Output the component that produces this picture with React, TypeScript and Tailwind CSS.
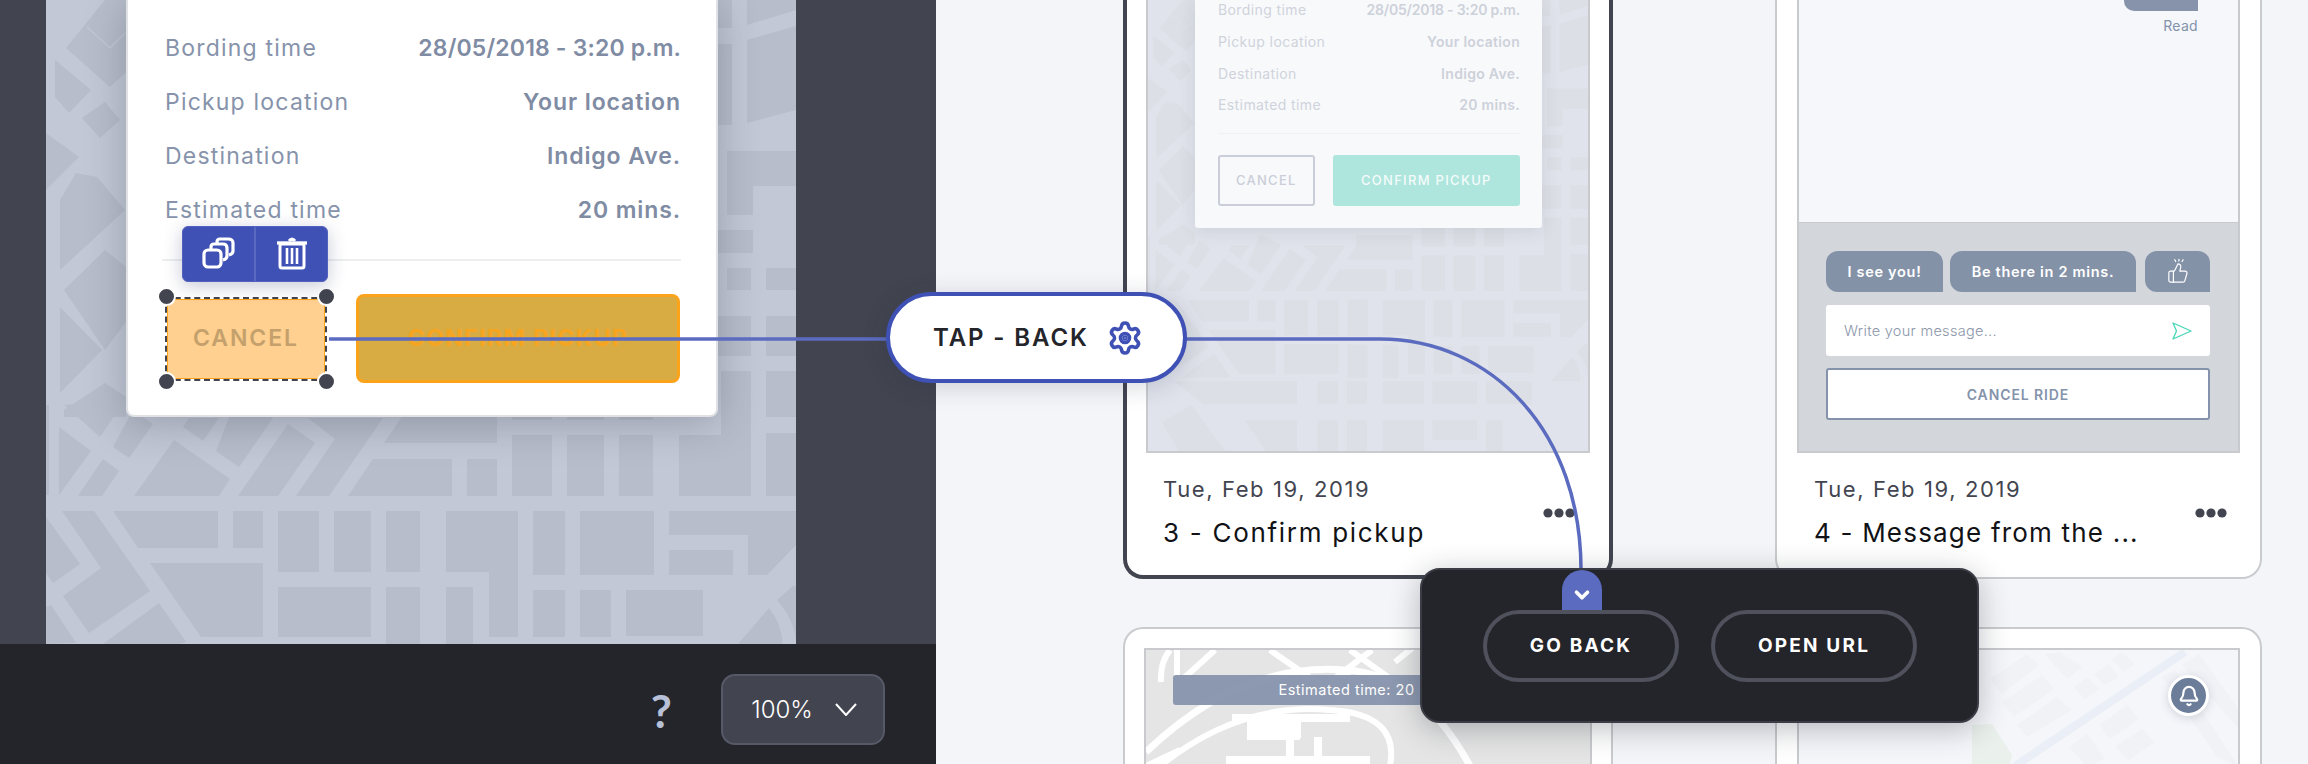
import { Bell, ChevronDown, Settings, ThumbsUp } from "lucide-react";

// map blocks, in the coordinates of the big canvas phone (46..796 wide)
const blocks = [
  "113,511 218,511 218,548 138,548",
  "233,511 263,511 263,548 233,548",
  "278,511 319,511 319,572 278,572",
  "334,511 371,511 371,572 334,572",
  "386,511 420,511 420,572 386,572",
  "150,563 263,563 263,637 201,637",
  "278,587 371,587 371,637 278,637",
  "386,587 420,587 420,644 386,644",
  "62,511 94,511 150,591 89,633 63,596 101,568",
  "46,517 80,564 53,583 46,573",
  "159,603 186,642 179,644 103,644",
  "46,607 51,605 76,643 46,644",
  "59,427 91,451 59,495",
  "103,459 119,471 102,496 78,496",
  "174,440 230,479 219,496 134,496",
  "288,424 315,443 278,496 238,496",
  "216,451 239,467 273,418 238,400 228,420",
  "183,427 203,441 219,418 189,418",
  "113,447 129,458 153,424 133,410",
  "64,405 100,437 125,400",
  "46,405 49,405 49,495 46,495",
  "308,418 335,439 296,496 329,496 383,418",
  "348,496 373,459 452,459 452,496",
  "384,443 401,418 401,400 497,400 497,443",
  "467,459 497,459 497,496 467,496",
  "512,435 552,435 552,496 512,496",
  "567,435 604,435 604,496 567,496",
  "619,435 653,435 653,496 619,496",
  "512,380 552,380 552,420 512,420",
  "567,380 604,380 604,420 567,420",
  "619,380 653,380 653,420 619,420",
  "679,435 721,435 721,371 751,371 751,496 679,496",
  "766,433 796,433 796,496 766,496",
  "766,371 796,371 796,417 766,417",
  "400,511 420,511 420,572 400,572",
  "446,511 518,511 518,637 489,637 489,572 446,572",
  "533,511 565,511 565,575 533,575",
  "580,511 654,511 654,575 580,575",
  "669,511 796,511 796,545 767,575 748,575 748,535 669,535",
  "669,550 733,550 733,575 669,575",
  "533,590 565,590 565,637 533,637",
  "580,590 611,590 611,637 580,637",
  "626,590 703,590 703,636 626,636",
  "446,587 473,587 473,644 446,644",
  "718,0 732,0 732,28 718,28",
  "718,44 732,44 732,125 718,125",
  "747,0 796,0 796,10 747,25",
  "747,40 796,26 796,110 747,123",
  "727,151 796,151 796,186 753,186 753,215 727,215",
  "718,230 753,230 753,253 718,253",
  "727,268 751,268 751,290 727,290",
  "766,268 796,268 796,290 766,290",
  "718,316 751,316 751,356 718,356",
  "766,316 796,316 796,356 766,356",
  "66,48 105,0 126,0 126,72 110,87",
  "55,60 91,90 69,113 55,97",
  "82,118 105,102 120,120 100,138",
  "46,133 79,157 46,190",
  "76,173 60,200 60,270 125,210 97,177",
  "64,290 105,250 126,267 126,322 105,350",
  "60,307 102,350 60,393",
  "64,410 105,383 126,397 126,417 64,417",
  // below the fold of the big canvas, only the thumbnail shows these
  "90,650 300,650 300,689 140,689",
  "335,650 370,650 370,689 335,689",
  "385,650 419,650 419,689 385,689",
  "446,650 517,650 517,689 446,689",
  "531,650 607,650 607,689 531,689",
  "622,650 700,650 700,689 622,689",
  "210,716 300,716 300,787 260,787",
  "335,716 370,716 370,787 335,787",
  "385,716 419,716 419,787 385,787",
  "446,716 517,716 517,787 446,787",
  "531,716 607,716 607,750 531,750",
  "622,716 650,716 650,787 622,787",
  "70,720 120,690 190,787 110,787",
];

function CityMap({ road, block, bottom }: { road: string; block: string; bottom: number }) {
  return (
    <svg viewBox={`46 0 750 ${bottom}`} className="absolute inset-x-0 top-0 w-full" style={{ backgroundColor: road }}>
      {blocks.map((points) => (
        <polygon key={points} points={points} fill={block} />
      ))}
      <path d="M793 586 L777 600 Q796 622 796 644 L796 586Z" fill={block} />
      <path d="M769 608 Q783 625 783 650 L733 650Z" fill={block} />
      <path d="M87 27 L110 48 L125 33" fill="none" stroke={road} strokeWidth="1.5" />
    </svg>
  );
}

function CopyIcon() {
  return (
    <svg width="33" height="33" viewBox="0 0 33 33" fill="none" stroke="#fff" strokeWidth="3.2" strokeLinejoin="round">
      <rect x="2" y="13" width="17" height="17" rx="4" />
      <path d="M9 12 V10 Q9 7 12 7 H21 Q25 7 25 11 V19 Q25 22 21 23" />
      <path d="M15 6 V5 Q15 2 18 2 H26 Q31 2 31 6 V14 Q31 17 27 18" />
    </svg>
  );
}

function TrashIcon() {
  return (
    <svg width="32" height="33" viewBox="0 0 32 33" fill="none" stroke="#fff" strokeWidth="3">
      <path d="M1 6 H31" strokeWidth="3.4" />
      <path d="M13 4 Q16 0 19 4" fill="#fff" />
      <rect x="4" y="7" width="24" height="24" rx="2" />
      <path d="M11 11 V27 M16 11 V27 M21 11 V27" strokeWidth="2.6" />
    </svg>
  );
}

function Dots() {
  return (
    <svg width="32" height="10" viewBox="0 0 32 10" fill="#42454f" className="shrink-0">
      <circle cx="5" cy="5" r="4.6" />
      <circle cx="16" cy="5" r="4.6" />
      <circle cx="27" cy="5" r="4.6" />
    </svg>
  );
}

function CardFooter({ title, pr, tracking }: { title: string; pr: string; tracking: string }) {
  return (
    <div className={`flex items-center justify-between pt-[22px] pl-[17px] ${pr}`}>
      <div>
        <p className="h-[28px] text-[22px] leading-[28px] tracking-[1.6px] text-[#42454f]">Tue, Feb 19, 2019</p>
        <p className={`mt-[12px] h-[36px] text-[26px] leading-[36px] text-[#111216] ${tracking}`}>{title}</p>
      </div>
      <Dots />
    </div>
  );
}

const rows = [
  ["Bording time", "28/05/2018 - 3:20 p.m."],
  ["Pickup location", "Your location"],
  ["Destination", "Indigo Ave."],
  ["Estimated time", "20 mins."],
];

function PhoneSheet() {
  return (
    <div className="relative ml-[80px] h-[417px] w-[592px] rounded-b-[8px] border-x-2 border-b-2 border-[#dfe1e4] bg-white pt-[21px] pr-[35px] pl-[37px] shadow-[0_6px_40px_rgba(40,48,64,0.28)]">
      {rows.map(([label, value], i) => (
        <div key={label} className="flex h-[54px] items-center justify-between text-[23px] tracking-[1.2px]">
          <span className="text-[#8693ab]">{label}</span>
          <span className={`font-semibold text-[#7f8ca4] ${i === 0 ? "tracking-[0.15px]" : "tracking-[0.9px]"}`}>{value}</span>
        </div>
      ))}
      <div className="mt-[22px] ml-[-3px] h-[2px] bg-[#eceef0]" />
      <div className="mt-[33px] flex items-center gap-[30px]">
        <div className="relative ml-[1px] flex h-[82px] w-[160px] items-center justify-center rounded-[4px] border-2 border-[#ffa31a] bg-[#ffd08f] text-[23px] font-semibold tracking-[1.9px] text-[#c4a06c]">
          CANCEL
          <div className="absolute -inset-[3px] border-2 border-white">
            <div className="absolute -inset-[2px] border-2 border-dashed border-[#42454f]" />
          </div>
          <span className="absolute -top-[13px] -left-[11px] size-[19px] rounded-full border-2 border-white bg-[#42454f]" />
          <span className="absolute -top-[13px] -right-[12px] size-[19px] rounded-full border-2 border-white bg-[#42454f]" />
          <span className="absolute -bottom-[13px] -left-[11px] size-[19px] rounded-full border-2 border-white bg-[#42454f]" />
          <span className="absolute -right-[12px] -bottom-[13px] size-[19px] rounded-full border-2 border-white bg-[#42454f]" />
          <div className="absolute -top-[74px] left-[14px] flex h-[56px] w-[146px] rounded-[6px] border border-[#5261bd] bg-[#3f51b5] shadow-[0_4px_18px_rgba(30,40,90,0.25)]">
            <div className="flex flex-1 items-center justify-center border-r-2 border-[#5a69c0]">
              <CopyIcon />
            </div>
            <div className="flex flex-1 items-center justify-center">
              <TrashIcon />
            </div>
          </div>
        </div>
        <div className="flex h-[89px] w-[324px] items-center justify-center rounded-[8px] border-[3px] border-[#fca31c] bg-[#d8ab43] text-[23px] font-bold tracking-[1.4px] text-[#f7a51f]">
          CONFIRM PICKUP
        </div>
      </div>
    </div>
  );
}

function ThumbSheet() {
  return (
    <div className="relative ml-[47px] flow-root h-[228px] w-[347px] rounded-b-[3px] bg-[#f8f9fb] pr-[22px] pl-[23px] shadow-[0_3px_18px_rgba(60,70,90,0.12)]">
      {rows.map(([label, value], i) => (
        <div key={label} className={`flex h-[31.7px] items-center justify-between text-[14px] tracking-[0.4px] ${i === 0 ? "-mt-[6px]" : ""}`}>
          <span className="text-[#cfd3dc]">{label}</span>
          <span className={`font-semibold text-[#cdd1da] ${i === 0 ? "-tracking-[0.2px]" : "tracking-[0.3px]"}`}>{value}</span>
        </div>
      ))}
      <div className="mt-[12px] h-px bg-[#f0f1f4]" />
      <div className="mt-[21px] flex gap-[18px]">
        <div className="flex h-[51px] w-[97px] items-center justify-center rounded-[3px] border-2 border-[#c9ced8] text-[13px] font-medium tracking-[1.3px] text-[#c9ced8]">
          CANCEL
        </div>
        <div className="flex h-[51px] w-[188px] items-center justify-center rounded-[3px] bg-[#aee6dd] text-[13px] font-medium tracking-[1.3px] text-[#f4fbfa]">
          CONFIRM PICKUP
        </div>
      </div>
    </div>
  );
}

function ChatPane() {
  return (
    <div className="h-[453px] border-x-2 border-b-2 border-[#c8cacd]">
      <div className="relative h-[223px] border-b border-[#c8cacd] bg-[#f5f7fb]">
        <div className="absolute top-0 right-[40px] h-[11px] w-[74px] rounded-bl-[10px] bg-[#8793ab]" />
        <span className="absolute top-[15px] right-[40px] text-[14px] tracking-[0.3px] text-[#8493ab]">Read</span>
      </div>
      <div className="h-[228px] bg-[#d3d6db] pt-[28px] pr-[28px] pl-[27px]">
        <div className="flex text-[14.5px] font-semibold tracking-[0.7px] text-white">
          <span className="flex h-[41px] w-[117px] items-center justify-center rounded-[12px] rounded-br-none bg-[#8492a8]">I see you!</span>
          <span className="ml-[7px] flex h-[41px] w-[186px] items-center justify-center rounded-[12px] rounded-br-none bg-[#8492a8]">Be there in 2 mins.</span>
          <span className="ml-[9px] flex h-[41px] w-[65px] items-center justify-center rounded-[12px] rounded-br-none bg-[#8492a8]">
            <ThumbsUp size={22} strokeWidth={1.3} className="mt-[3px] overflow-visible">
              <path d="M13 -3 V-1 M8.5 -2.5 L9.5 -0.5 M17.5 -2.5 L16.5 -0.5" />
            </ThumbsUp>
          </span>
        </div>
        <div className="mt-[13px] flex h-[51px] items-center justify-between rounded-[3px] bg-white pr-[18px] pl-[18px] text-[14.5px] font-light tracking-[0.3px] text-[#8b96aa]">
          <span>Write your message...</span>
          <svg width="20" height="20" viewBox="0 0 20 20" fill="none" stroke="#45d6b4" strokeWidth="1.3" strokeLinejoin="round">
            <path d="M1 2 L19 10 L1 18 L4.5 10Z" />
          </svg>
        </div>
        <div className="mt-[12px] flex h-[52px] items-center justify-center rounded-[3px] border-2 border-[#8493ab] bg-white text-[14px] font-semibold tracking-[0.9px] text-[#8493ab]">
          CANCEL RIDE
        </div>
      </div>
    </div>
  );
}

function StreetThumb() {
  return (
    <div className="relative h-[116px] overflow-hidden border-x-2 border-t-2 border-[#c8cacd] bg-[#e5e5e5]">
      <svg width="444" height="116" viewBox="1146 648 444 116" fill="none" stroke="#fff" className="absolute inset-0">
        <path d="M1146 750 Q1240 660 1345 668 Q1420 672 1470 764" strokeWidth="7" />
        <path d="M1160 764 Q1240 700 1330 708 Q1400 712 1390 764" strokeWidth="6" />
        <path d="M1161 680 Q1160 660 1170 648 M1177 648 V676 M1184 676 L1215 648" strokeWidth="6" />
        <path d="M1270 648 L1345 700 M1372 648 L1310 695 M1395 660 L1420 640 M1345 672 L1385 700 M1350 648 L1395 680" strokeWidth="6" />
        <path d="M1232 716 H1350 M1226 758 H1370 M1290 715 V764 M1318 735 V764" strokeWidth="8" />
        <path d="M1250 716 V735 H1300 M1146 764 L1180 748" strokeWidth="6" />
        <rect x="1249" y="716" width="52" height="20" fill="#fff" stroke="none" />
      </svg>
      <div className="relative mt-[25px] ml-[27px] flex h-[30px] w-[386px] items-center justify-center rounded-[3px] bg-[#8794ac]/95 text-[14.5px] tracking-[0.5px] text-white">
        Estimated time: 20 mins
      </div>
    </div>
  );
}

function RouteThumb() {
  return (
    <div className="relative h-[116px] overflow-hidden border-x-2 border-t-2 border-[#c8cacd] bg-[#f5f6fa]">
      <svg width="443" height="116" viewBox="1797 648 443 116" className="absolute inset-0">
        <g fill="#f1f2f6">
          <polygon points="1988,677 2025,652 2037,663 2000,692" />
          <polygon points="2000,700 2040,673 2052,687 2012,715" />
          <polygon points="2015,723 2055,695 2070,708 2025,735" />
          <polygon points="2043,652 2058,650 2080,665 2065,677" />
          <polygon points="2072,685 2085,675 2098,687 2083,697" />
          <polygon points="2092,672 2107,662 2117,675 2102,683" />
          <polygon points="2110,657 2120,650 2133,662 2122,670" />
          <polygon points="2098,723 2125,703 2137,717 2108,737" />
          <polygon points="2113,745 2140,727 2153,740 2127,758" />
          <polygon points="2067,745 2085,732 2103,757 2085,764" />
          <polygon points="2160,675 2173,668 2237,765 2215,755" />
          <polygon points="2180,663 2197,652 2237,707 2237,727" />
        </g>
        <path d="M2013 764 L2183 650" stroke="#e9eef7" strokeWidth="8" />
        <polygon points="1970,723 1990,722 2010,753 2007,764 1970,764" fill="#eaf1ec" />
      </svg>
      <div className="absolute top-[25px] right-[29px] flex size-[41px] items-center justify-center rounded-full border-[3px] border-white bg-[#6c7d9a] shadow-[0_2px_10px_rgba(60,70,90,0.2)]">
        <Bell size={22} strokeWidth={2.4} className="text-white" />
      </div>
    </div>
  );
}

export default function App() {
  return (
    <div className="relative flex h-[764px] w-[2308px] overflow-hidden bg-[#f4f5f8] font-[family-name:Inter,sans-serif]">
      {/* Canvas */}
      <div className="flex w-[936px] shrink-0 flex-col">
        <div className="h-[644px] bg-[#42454f] pl-[46px]">
          <div className="relative h-full w-[750px] overflow-hidden">
            <CityMap road="#c2c8d5" block="#b7bdca" bottom={644} />
            <div className="relative">
              <PhoneSheet />
            </div>
          </div>
        </div>
        <div className="flex h-[120px] items-start justify-end bg-[#24252a] pt-[30px] pr-[51px]">
          <span className="mt-[7px] mr-[49px] font-[family-name:Lato,sans-serif] text-[46px] leading-[60px] font-bold text-[#b7c0d6]">?</span>
          <div className="flex h-[71px] w-[164px] items-center justify-center gap-[22px] rounded-[14px] border-2 border-[#565967] bg-[#42454f] pl-[2px] text-[24px] font-light text-white">
            100%
            <svg width="22" height="13" viewBox="0 0 22 13" fill="none" stroke="#fff" strokeWidth="2">
              <path d="M1 1 L11 12 L21 1" />
            </svg>
          </div>
        </div>
      </div>

      {/* Screens grid */}
      <div className="ml-[187px] grid grid-cols-[490px_487px] grid-rows-[579px_1fr] gap-x-[162px] gap-y-[48px]">
        <div className="rounded-b-[20px] border-x-4 border-b-4 border-[#42454f] bg-white">
          <div className="mx-[19px] h-[453px] overflow-hidden border-x-2 border-b-2 border-[#c8cacd]">
            <div className="relative h-full overflow-hidden">
              <CityMap road="#e0e3eb" block="#dcdfe5" bottom={800} />
              <div className="relative">
                <ThumbSheet />
              </div>
            </div>
          </div>
          <div className="mx-[19px]">
            <CardFooter title="3 - Confirm pickup" pr="pr-[15px]" tracking="tracking-[1.7px]" />
          </div>
        </div>
        <div className="rounded-b-[20px] border-x-2 border-b-2 border-[#c9cbce] bg-white">
          <div className="mx-[20px]">
            <ChatPane />
            <CardFooter title="4 - Message from the ..." pr="pr-[13px]" tracking="tracking-[1.2px]" />
          </div>
        </div>
        <div className="rounded-t-[20px] border-x-2 border-t-2 border-[#c9cbce] bg-white px-[19px] pt-[19px]">
          <StreetThumb />
        </div>
        <div className="rounded-t-[20px] border-x-2 border-t-2 border-[#c9cbce] bg-white px-[20px] pt-[19px]">
          <RouteThumb />
        </div>
      </div>

      {/* Interaction wire */}
      <svg width="2308" height="764" fill="none" stroke="#5b6bbf" strokeWidth="3.5" className="pointer-events-none absolute inset-0">
        <path d="M329 339 H890" />
        <path d="M1185 339 H1380 C1490 339 1583 430 1581 575" />
      </svg>

      {/* Interaction node */}
      <div className="absolute top-[292px] left-[886px] flex h-[91px] w-[301px] items-center gap-[18px] rounded-full border-4 border-[#3f51b5] bg-white pl-[43px] text-[24px] font-semibold tracking-[1.9px] text-[#24252a] shadow-[0_4px_24px_rgba(30,40,70,0.18)]">
        TAP - BACK
        <Settings size={36} strokeWidth={2.4} className="text-[#3f51b5]">
          <circle cx="12" cy="12" r="0.6" fill="currentColor" />
        </Settings>
      </div>

      {/* Action popup */}
      <div className="absolute top-[568px] left-[1420px] flex h-[155px] w-[559px] gap-[32px] rounded-[20px] border-2 border-[#3a3c46] bg-[#24252a] pt-[40px] pl-[61px] shadow-[0_6px_30px_rgba(30,35,50,0.3)]">
        <div className="absolute top-0 left-[140px] flex h-[41px] w-[40px] items-start justify-center rounded-t-full bg-[#5b6bbf] pt-[14px]">
          <ChevronDown size={22} strokeWidth={4} className="text-white" />
        </div>
        <div className="relative flex h-[72px] w-[196px] items-center justify-center rounded-full border-4 border-[#4f515c] text-[19px] font-bold tracking-[2.2px] text-white">
          GO BACK
        </div>
        <div className="flex h-[72px] w-[206px] items-center justify-center rounded-full border-4 border-[#4f515c] text-[19px] font-bold tracking-[2.2px] text-white">
          OPEN URL
        </div>
      </div>
    </div>
  );
}
